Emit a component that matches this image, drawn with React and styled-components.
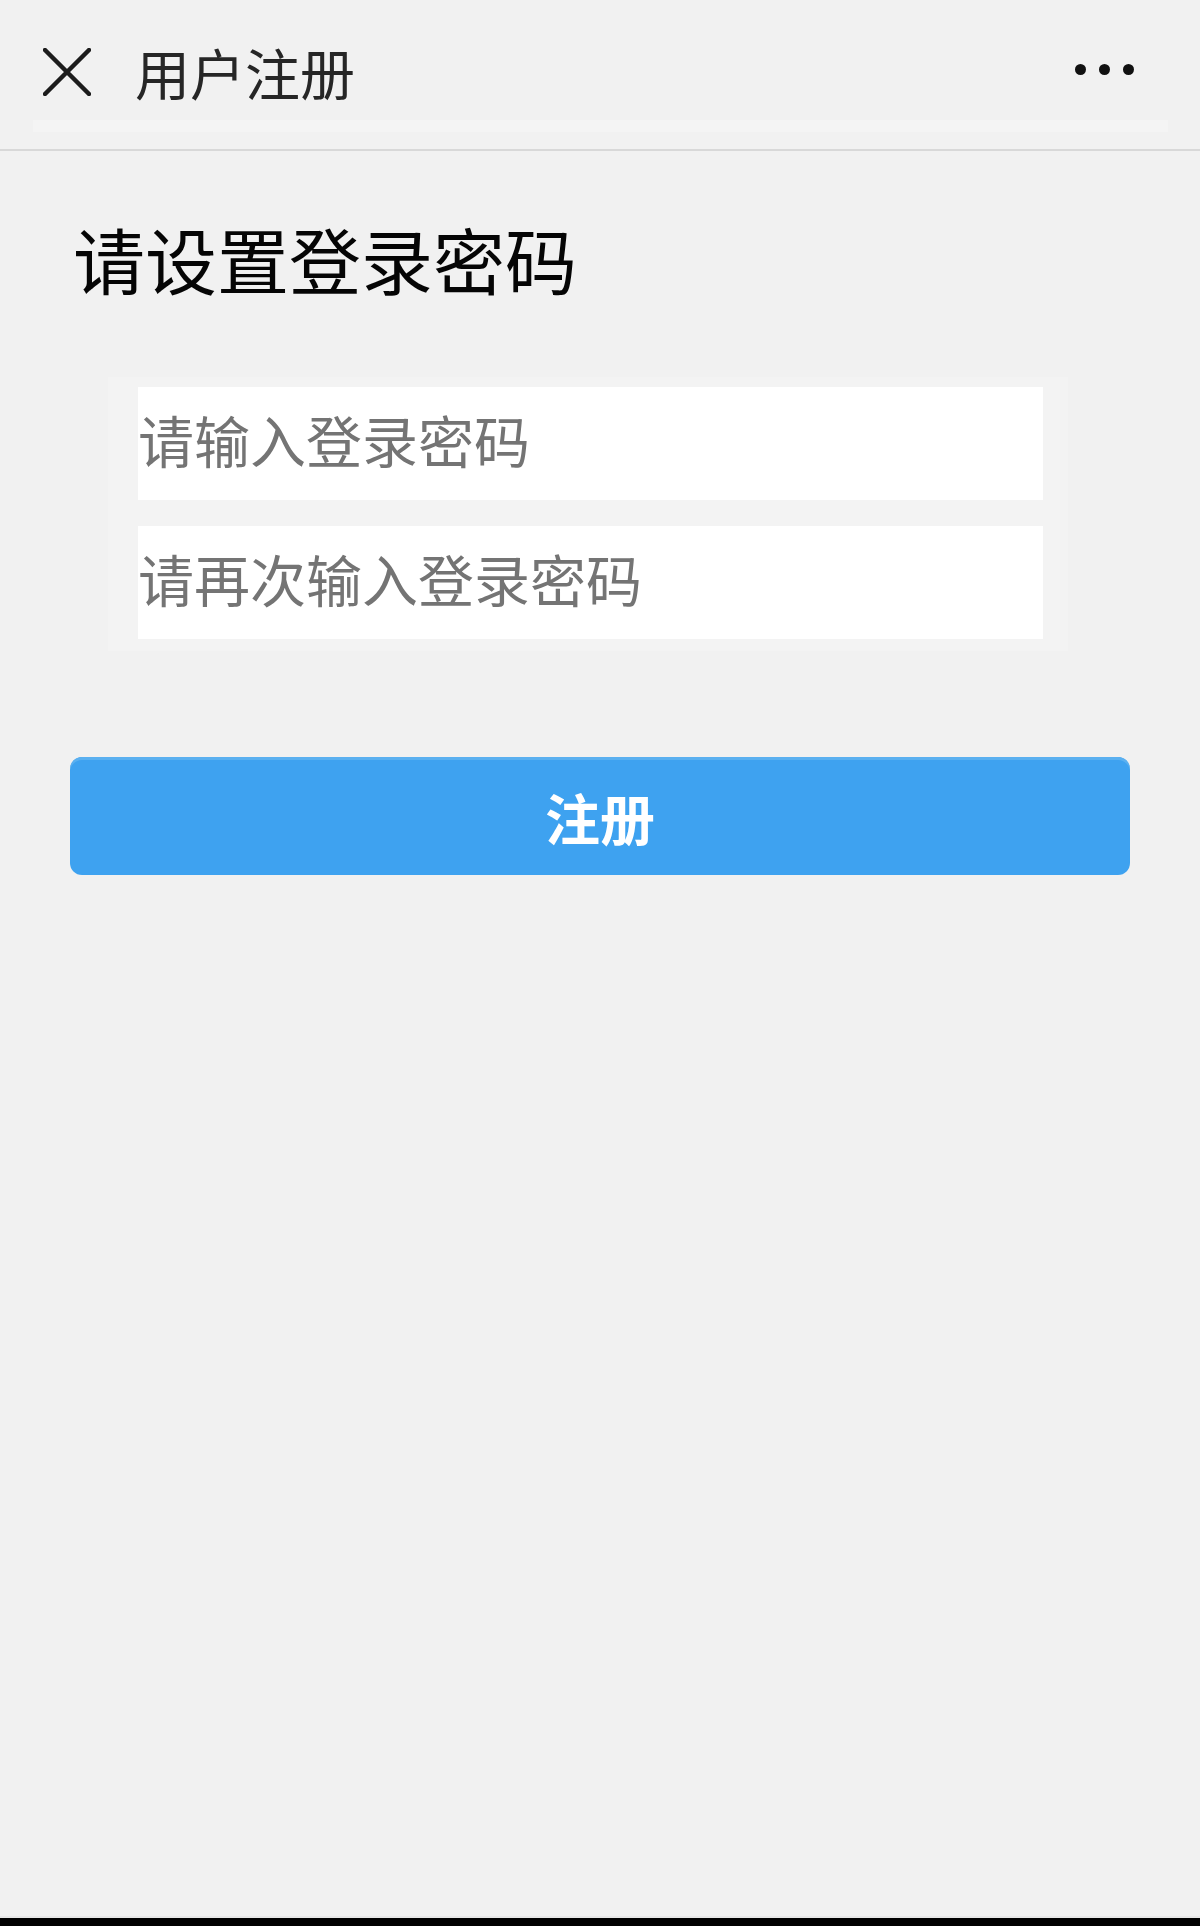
import React from "react";
import styled, { createGlobalStyle } from "styled-components";

const GlobalStyle = createGlobalStyle`
  html, body {
    margin: 0;
    padding: 0;
    background: #f1f1f1;
  }
  * { box-sizing: border-box; }
  body {
    font-family: "Noto Sans CJK SC", "Noto Sans", sans-serif;
  }
`;

const Page = styled.div`
  height: 1926px;
  display: flex;
  flex-direction: column;
  background: #f1f1f1;
`;

const Header = styled.header`
  height: 151px;
  flex: none;
  display: flex;
  align-items: center;
  padding: 0 66px 0 43px;
  background: #f1f1f1 linear-gradient(#f4f4f4, #f4f4f4) no-repeat 33px 120px / 1135px 12px;
  border-bottom: 2px solid #d8d8d8;
`;

const CloseButton = styled.button`
  width: 48px;
  height: 48px;
  padding: 0;
  border: none;
  background: transparent;
  display: flex;
  align-items: center;
  justify-content: center;
  margin-top: -6px;
`;

const Title = styled.h1`
  margin: 0 0 0 44px;
  font-size: 55px;
  font-weight: 400;
  color: #262626;
  line-height: 1;
  margin-top: -6px;
`;

const More = styled.div`
  margin-left: auto;
  display: flex;
  gap: 13px;
  margin-top: -10px;
`;

const Dot = styled.span`
  width: 11px;
  height: 11px;
  border-radius: 50%;
  background: #111;
`;

const Content = styled.main`
  flex: 1;
  display: flex;
  flex-direction: column;
`;

const Heading = styled.h2`
  margin: 71px 0 0 73px;
  font-size: 72px;
  font-weight: 400;
  line-height: 1;
  color: #050505;
`;

const FieldGroup = styled.div`
  margin: 83px 0 0 108px;
  width: 960px;
  padding: 10px 30px 12px 30px;
  display: flex;
  flex-direction: column;
  gap: 26px;
  background: #f3f3f3;
`;

const Field = styled.input`
  display: block;
  width: 905px;
  height: 113px;
  border: none;
  outline: none;
  padding: 0 0 10px 0;
  background: #fff;
  font-family: "Noto Sans CJK SC", "Noto Sans", sans-serif;
  font-size: 56px;
  color: #333;
  &::placeholder {
    color: #747474;
  }
`;

const SubmitButton = styled.button`
  margin: 106px 0 0 70px;
  width: 1060px;
  height: 118px;
  border: none;
  border-radius: 12px;
  background: #3ea2f0;
  color: #fff;
  font-family: "Noto Sans CJK SC", "Noto Sans", sans-serif;
  font-size: 55px;
  font-weight: 700;
  box-shadow: inset 0 3px 0 #5ab0f0;
`;

const BottomBar = styled.div`
  flex: none;
  height: 10px;
  border-top: 2px solid #e8e8e8;
  background: #000;
`;

export default function App() {
  return (
    <>
      <GlobalStyle />
      <Page>
        <Header>
          <CloseButton aria-label="关闭">
            <svg width="48" height="48" viewBox="0 0 48 48">
              <path d="M2 2 L46 46 M46 2 L2 46" stroke="#1c1c1c" strokeWidth="4.5" strokeLinecap="round" fill="none" />
            </svg>
          </CloseButton>
          <Title>用户注册</Title>
          <More>
            <Dot />
            <Dot />
            <Dot />
          </More>
        </Header>
        <Content>
          <Heading>请设置登录密码</Heading>
          <FieldGroup>
            <Field type="password" placeholder="请输入登录密码" />
            <Field type="password" placeholder="请再次输入登录密码" />
          </FieldGroup>
          <SubmitButton>注册</SubmitButton>
        </Content>
        <BottomBar />
      </Page>
    </>
  );
}
